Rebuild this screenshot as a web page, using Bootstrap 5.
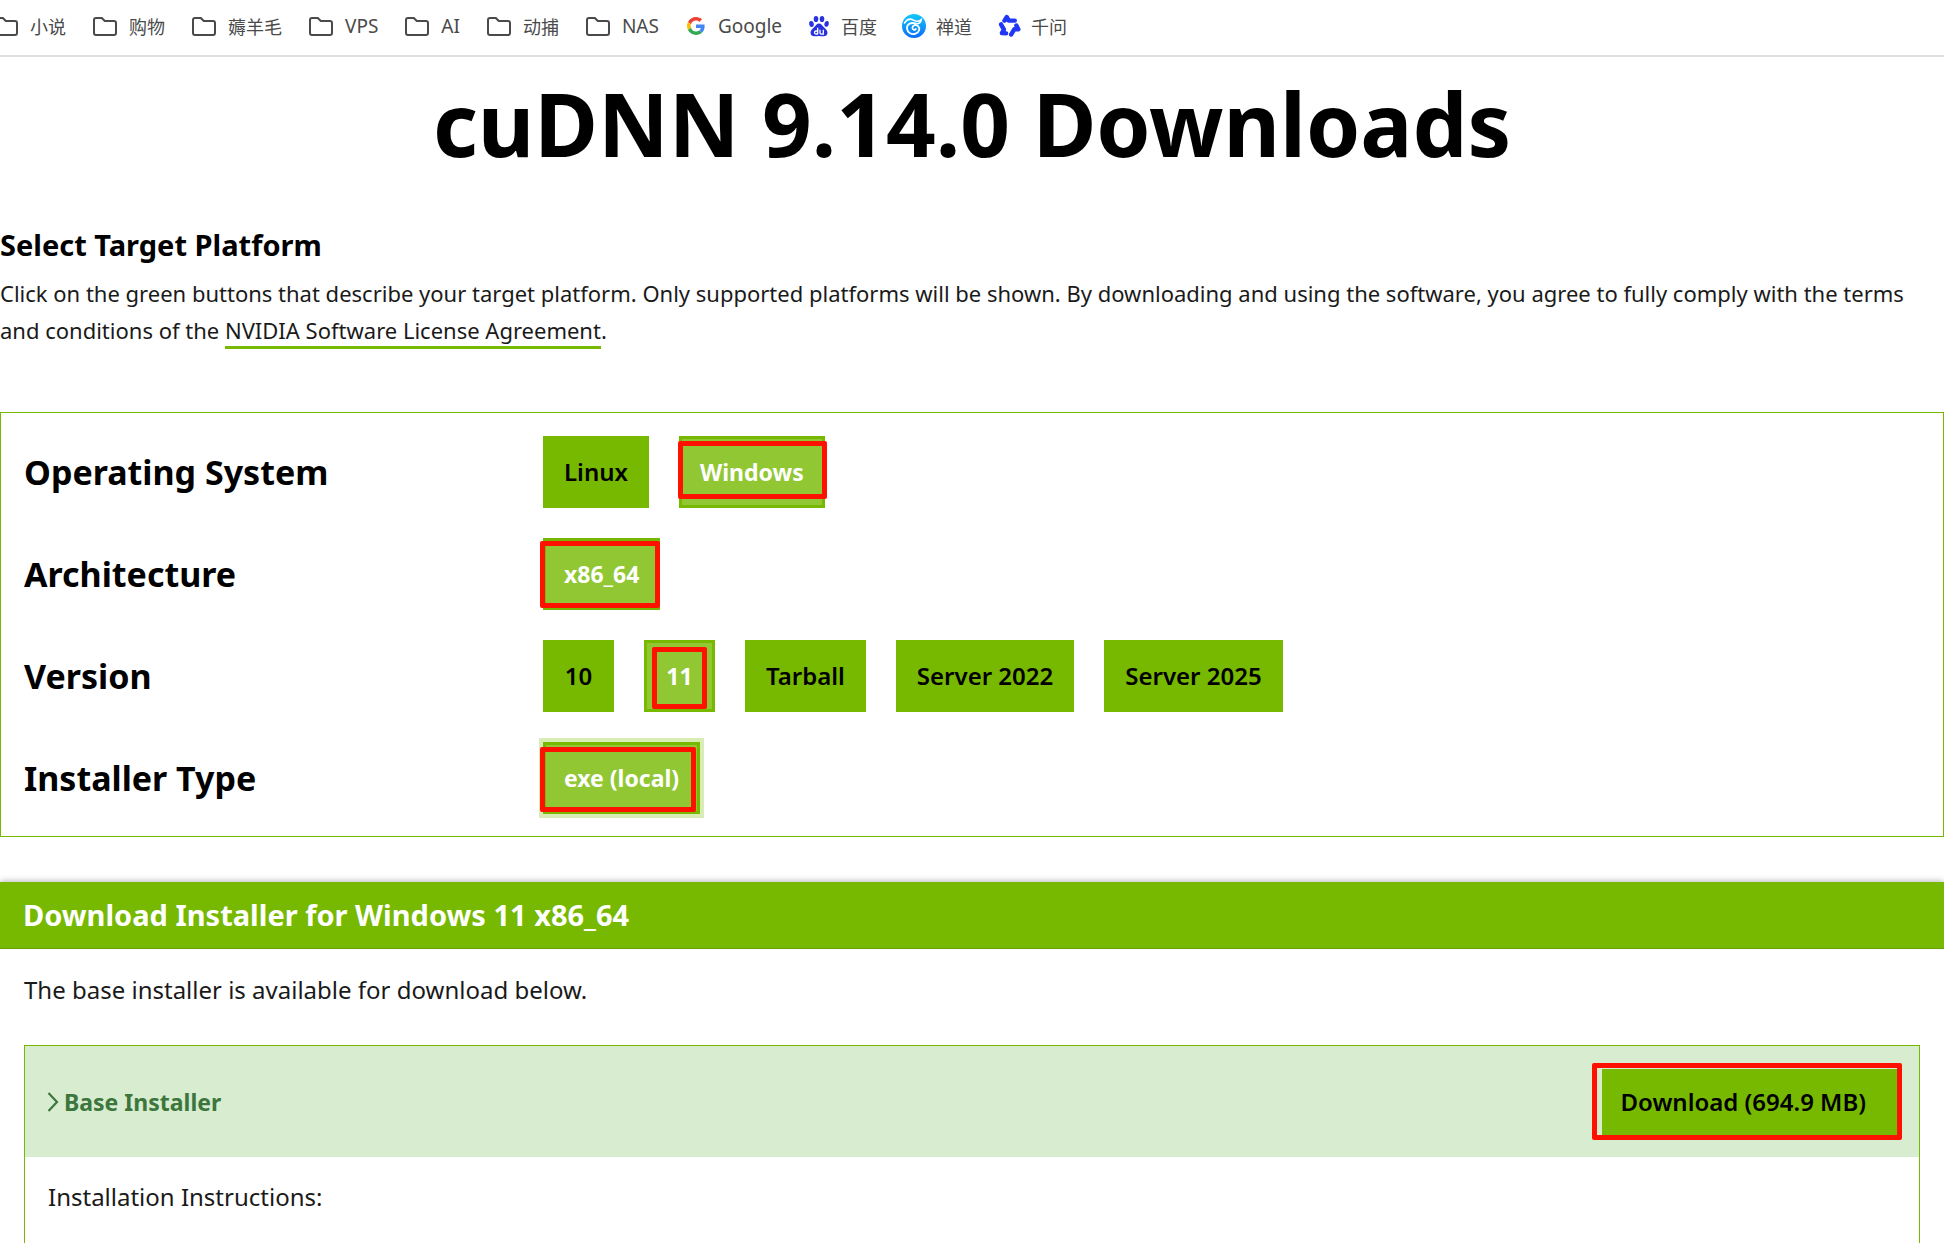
<!DOCTYPE html>
<html lang="en">
<head>
<meta charset="utf-8">
<meta name="viewport" content="width=device-width, initial-scale=1">
<title>cuDNN 9.14.0 Downloads</title>
<link rel="stylesheet" href="https://cdn.jsdelivr.net/npm/bootstrap@5.3.0/dist/css/bootstrap.min.css">
<style>
  :root { --nv: #76b900; --nv-light: #91c733; --mark: #ff1100; }
  body { font-family: "Noto Sans", "Noto Sans CJK SC", sans-serif; font-size: 24px; line-height: 36px; color: #1a1a1a; background: #fff; overflow-x: hidden; }

  .bookmarks { gap: 25px; height: 57px; margin-left: -8px; padding-bottom: 4px; border-bottom: 2px solid #dfdfdf; font-size: 19px; line-height: 24px; }
  .bookmarks a { gap: 10px; color: #4a4a4a; }
  .bookmarks [lang] { font-family: "Noto Sans CJK SC", sans-serif; font-size: 18px; }
  .bookmarks svg { width: 24px; height: 24px; flex: none; }
  .bookmarks .folder svg { margin: 0 2px; }

  h1, h2, h3 { color: #000; }
  .page-title { font-size: 87px; font-weight: 700; line-height: 110px; margin: 11px 0 49px; }
  .section-title { font-size: 29px; font-weight: 700; line-height: 36px; margin-bottom: 12px; }
  .intro { font-size: 22px; line-height: 37px; margin-bottom: 63px; }
  .intro a { color: inherit; border-bottom: 3px solid var(--nv); padding-bottom: 1px; }

  .selector { border: 1px solid var(--nv); padding: 23px 23px 22px; margin-bottom: 45px; }
  .selector-rows, .options { gap: 30px; }
  .selector h3 { flex: 0 0 519px; font-size: 34px; font-weight: 700; line-height: 42px; margin: 0; }

  .btn-nv { --bs-btn-color: #000; --bs-btn-bg: var(--nv); --bs-btn-hover-color: #000; --bs-btn-hover-bg: var(--nv-light);
    --bs-btn-border-color: var(--nv); --bs-btn-hover-border-color: var(--nv);
    --bs-btn-active-color: #fff; --bs-btn-active-bg: var(--nv-light); --bs-btn-active-border-color: var(--nv);
    --bs-btn-border-width: 3px; --bs-btn-border-radius: 0; --bs-btn-padding-x: 18px; --bs-btn-padding-y: 15px;
    --bs-btn-font-size: 24px; --bs-btn-line-height: 36px; --bs-btn-font-weight: 600; min-width: 71px; }
  .btn-nv.active { --bs-btn-font-weight: 700; --bs-btn-font-size: 23px; }
  .btn-nv.last-picked { box-shadow: 0 0 0 4px #d9ecb6; }
  .btn-download { --bs-btn-padding-y: 12px; --bs-btn-padding-x: 16px; padding-right: 28px; }

  .outlined::after { content: ""; position: absolute; inset: var(--edge); border: 5px solid var(--mark); border-radius: 2px; pointer-events: none; }
  .edge-windows { --edge: 5px -2px 9px -1px; }
  .edge-arch { --edge: 3px 0 2px -3px; }
  .edge-version { --edge: 7px 8px 3px 8px; }
  .edge-type { --edge: 5px 4px 2px -3px; }
  .edge-download { --edge: -6px -5px -5px -10px; }

  .result-title { background: var(--nv); border-bottom: 1px solid #65a000; box-shadow: 0 -1px 6px rgba(0,0,0,.28); color: #fff; font-size: 29px; font-weight: 700; line-height: 36px; padding: 15px 23px; margin: 0; }
  .result-body { padding: 23px 24px 0; background: #fff; position: relative; }
  .result-body > p { margin-bottom: 37px; }
  .installer { border: 1px solid var(--nv); border-bottom: 0; }
  .installer-head { background: #d8ecd0; padding: 22px; min-height: 111px; }
  .installer-head a { color: #3c763d; font-size: 23px; font-weight: 700; gap: 5px; }
  .installer-text { padding: 22px 23px; margin: 0; }
</style>
<script src="https://cdn.jsdelivr.net/npm/bootstrap@5.3.0/dist/js/bootstrap.bundle.min.js"></script>
</head>
<body class="d-flex flex-column min-vh-100">

<svg class="d-none" aria-hidden="true">
  <symbol id="folder" viewBox="0 0 24 24"><path d="M3 4h5.800l3 3H21a2 2 0 0 1 2 2v10a2 2 0 0 1-2 2H3a2 2 0 0 1-2-2V6a2 2 0 0 1 2-2z" fill="none" stroke="#4a4a4a" stroke-width="2" stroke-linejoin="round"/></symbol>
</svg>

<nav class="bookmarks d-flex align-items-center text-nowrap" aria-label="Bookmarks">
  <a class="folder d-flex align-items-center text-decoration-none" href="#"><svg><use href="#folder"/></svg><span lang="zh-CN">小说</span></a>
  <a class="folder d-flex align-items-center text-decoration-none" href="#"><svg><use href="#folder"/></svg><span lang="zh-CN">购物</span></a>
  <a class="folder d-flex align-items-center text-decoration-none" href="#"><svg><use href="#folder"/></svg><span lang="zh-CN">薅羊毛</span></a>
  <a class="folder d-flex align-items-center text-decoration-none" href="#"><svg><use href="#folder"/></svg><span>VPS</span></a>
  <a class="folder d-flex align-items-center text-decoration-none" href="#"><svg><use href="#folder"/></svg><span>AI</span></a>
  <a class="folder d-flex align-items-center text-decoration-none" href="#"><svg><use href="#folder"/></svg><span lang="zh-CN">动捕</span></a>
  <a class="folder d-flex align-items-center text-decoration-none" href="#"><svg><use href="#folder"/></svg><span>NAS</span></a>
  <a class="d-flex align-items-center text-decoration-none" href="#">
    <svg viewBox="-8 -8 64 64"><path fill="#EA4335" d="M24 9.500c3.540 0 6.710 1.220 9.210 3.600l6.850-6.850C35.900 2.380 30.470 0 24 0 14.620 0 6.510 5.380 2.560 13.220l7.980 6.190C12.430 13.720 17.740 9.500 24 9.500z"/><path fill="#4285F4" d="M46.980 24.550c0-1.570-.15-3.090-.38-4.550H24v9.020h12.940c-.58 2.960-2.260 5.480-4.780 7.180l7.730 6c4.510-4.180 7.090-10.360 7.090-17.650z"/><path fill="#FBBC05" d="M10.530 28.590A14.500 14.500 0 0 1 9.770 24c0-1.600.27-3.140.76-4.590l-7.980-6.190A23.900 23.900 0 0 0 0 24c0 3.880.92 7.540 2.560 10.780l7.970-6.190z"/><path fill="#34A853" d="M24 48c6.480 0 11.930-2.130 15.890-5.810l-7.730-6c-2.150 1.450-4.920 2.300-8.160 2.300-6.260 0-11.570-4.220-13.470-9.910l-7.980 6.190C6.510 42.620 14.620 48 24 48z"/></svg>
    <span>Google</span></a>
  <a class="d-flex align-items-center text-decoration-none" href="#">
    <svg viewBox="0 0 24 24"><g fill="#2932e1"><ellipse cx="4.500" cy="10" rx="2.300" ry="3" transform="rotate(-10 4.500 10)"/><ellipse cx="9" cy="5" rx="2.300" ry="3.100"/><ellipse cx="15" cy="5" rx="2.300" ry="3.100"/><ellipse cx="19.600" cy="9.800" rx="2.200" ry="2.900" transform="rotate(10 19.600 9.800)"/><path d="M12 9.500c2 0 3 1.500 4.200 3 1.500 1.800 4.300 3.500 4.300 6.200 0 2.400-1.800 3.600-4 3.600-1.600 0-2.900-.4-4.500-.4s-2.900.4-4.500.4c-2.200 0-4-1.200-4-3.600 0-2.700 2.800-4.400 4.300-6.200 1.200-1.500 2.200-3 4.200-3z"/></g><path d="M10.700 13.700v6.500M10.700 17h-1.700a1.500 1.500 0 0 0 0 3h1.700M13 15.800v3a1.300 1.300 0 0 0 1.300 1.300h2v-4.400" fill="none" stroke="#fff" stroke-width="1.300"/></svg>
    <span lang="zh-CN">百度</span></a>
  <a class="d-flex align-items-center text-decoration-none" href="#">
    <svg viewBox="0 0 24 24"><defs><linearGradient id="zen" x1="0" y1="0" x2="0" y2="1"><stop offset="0" stop-color="#12c9fb"/><stop offset="1" stop-color="#0a6cfb"/></linearGradient></defs><circle cx="12" cy="12" r="12" fill="url(#zen)"/><g fill="none" stroke="#fff" stroke-linecap="round"><path d="M2.500 9C5 5.200 8.500 4.400 11.500 6.200c2.600 1.500 5.500 1.400 7.800-.6-.4 2.800-2.300 4.300-5.300 4" stroke-width="1.500"/><path d="M13.800 9.700C9 7.800 4.600 10.300 5 14.600c.4 4.200 4.800 6.400 8.600 5 3.700-1.400 4.800-5.300 2.500-7.500-2.200-2-5.700-.8-5.700 1.700 0 2 2.500 2.800 3.500 1.200" stroke-width="1.800"/></g></svg>
    <span lang="zh-CN">禅道</span></a>
  <a class="d-flex align-items-center text-decoration-none" href="#">
    <svg viewBox="0 0 24 24"><g fill="#2237f5" stroke="#2237f5" stroke-width="4.400" stroke-linecap="round" stroke-linejoin="round"><path d="M7.500 6.600L9.800 3l2 3.600h6"/><path d="M7.500 6.600L9.800 3l2 3.600h6" transform="rotate(120 12 12.500)"/><path d="M7.500 6.600L9.800 3l2 3.600h6" transform="rotate(240 12 12.500)"/></g></svg>
    <span lang="zh-CN">千问</span></a>
</nav>

<main class="d-flex flex-column flex-grow-1">
  <h1 class="page-title text-center">cuDNN 9.14.0 Downloads</h1>

  <h2 class="section-title">Select Target Platform</h2>
  <p class="intro">Click on the green buttons that describe your target platform. Only supported platforms will be shown. By downloading and using the software, you agree to fully comply with the terms and conditions of the <a class="text-decoration-none" href="#">NVIDIA Software License Agreement</a>.</p>

  <section class="selector">
    <div class="selector-rows d-flex flex-column">
      <div class="d-flex align-items-center">
        <h3>Operating System</h3>
        <div class="options d-flex flex-wrap">
          <button type="button" class="btn btn-nv">Linux</button>
          <div class="position-relative outlined edge-windows"><button type="button" class="btn btn-nv active" aria-pressed="true">Windows</button></div>
        </div>
      </div>
      <div class="d-flex align-items-center">
        <h3>Architecture</h3>
        <div class="options d-flex flex-wrap">
          <div class="position-relative outlined edge-arch"><button type="button" class="btn btn-nv active" aria-pressed="true">x86_64</button></div>
        </div>
      </div>
      <div class="d-flex align-items-center">
        <h3>Version</h3>
        <div class="options d-flex flex-wrap">
          <button type="button" class="btn btn-nv">10</button>
          <div class="position-relative outlined edge-version"><button type="button" class="btn btn-nv active" aria-pressed="true">11</button></div>
          <button type="button" class="btn btn-nv">Tarball</button>
          <button type="button" class="btn btn-nv">Server 2022</button>
          <button type="button" class="btn btn-nv">Server 2025</button>
        </div>
      </div>
      <div class="d-flex align-items-center">
        <h3>Installer Type</h3>
        <div class="options d-flex flex-wrap">
          <div class="position-relative outlined edge-type"><button type="button" class="btn btn-nv active last-picked" aria-pressed="true">exe (local)</button></div>
        </div>
      </div>
    </div>
  </section>

  <section class="d-flex flex-column flex-grow-1">
    <h2 class="result-title">Download Installer for Windows 11 x86_64</h2>
    <div class="result-body d-flex flex-column flex-grow-1">
      <p>The base installer is available for download below.</p>
      <div class="installer flex-grow-1">
        <div class="installer-head d-flex align-items-center justify-content-between">
          <a class="d-flex align-items-center text-decoration-none" href="#">
            <svg width="12" height="20" viewBox="0 0 12 20" aria-hidden="true"><path d="M1.500 1l8.500 9-8.500 9" fill="none" stroke="#3c763d" stroke-width="2.200"/></svg>
            <span>Base Installer</span></a>
          <div class="position-relative outlined edge-download"><button type="button" class="btn btn-nv btn-download">Download (694.9 MB)</button></div>
        </div>
        <p class="installer-text">Installation Instructions:</p>
      </div>
    </div>
  </section>
</main>
</body>
</html>
